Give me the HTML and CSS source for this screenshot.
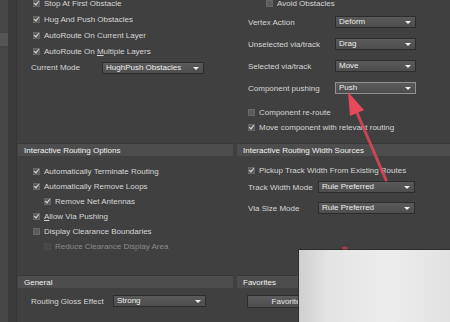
FILE: index.html
```html
<!DOCTYPE html>
<html lang="en">
<head>
    <meta charset="UTF-8">
    <meta name="viewport" content="width=device-width, initial-scale=1.0">
    <title>Interactive Routing Preferences</title>
    <link rel="stylesheet" href="styles.css">
</head>
<body>
    <div class="window">
        <div class="side">
            <div class="side-tab"></div>
        </div>

        <div class="panel">
            <!-- top block, scrolled up a little -->
            <section class="group top-left">
                <div class="row check"><span class="box on"></span><span>Stop At First Obstacle</span></div>
                <div class="row check"><span class="box on"></span><span>Hug And Push Obstacles</span></div>
                <div class="row check"><span class="box on"></span><span>AutoRoute On Current Layer</span></div>
                <div class="row check"><span class="box on"></span><span>AutoRoute On <u>M</u>ultiple Layers</span></div>
                <div class="row field">
                    <span class="label mode-label">Current Mode</span>
                    <div class="select mode-select">HughPush Obstacles</div>
                </div>
            </section>

            <section class="group top-right">
                <div class="row check avoid"><span class="box"></span><span>Avoid Obstacles</span></div>
                <div class="row field tall">
                    <span class="label">Vertex Action</span>
                    <div class="select">Deform</div>
                </div>
                <div class="row field tall">
                    <span class="label">Unselected via/track</span>
                    <div class="select">Drag</div>
                </div>
                <div class="row field tall">
                    <span class="label">Selected via/track</span>
                    <div class="select">Move</div>
                </div>
                <div class="row field tall">
                    <span class="label">Component pushing</span>
                    <div class="select focused">Push</div>
                </div>
                <div class="row check reroute"><span class="box"></span><span>Component re-route</span></div>
                <div class="row check small"><span class="box on"></span><span>Move component with relevant routing</span></div>
            </section>

            <section class="group">
                <h2 class="group-title">Interactive Routing Options</h2>
                <div class="group-body options">
                    <div class="row check small"><span class="box on"></span><span>Automatically Terminate Routing</span></div>
                    <div class="row check small"><span class="box on"></span><span>Automatically Remove Loops</span></div>
                    <div class="row check small indent"><span class="box on"></span><span>Remove Net Antennas</span></div>
                    <div class="row check small"><span class="box on"></span><span><u>A</u>llow Via Pushing</span></div>
                    <div class="row check small"><span class="box"></span><span>Display Clearance Boundaries</span></div>
                    <div class="row check small indent disabled"><span class="box"></span><span>Reduce Clearance Display Area</span></div>
                </div>
            </section>

            <section class="group">
                <h2 class="group-title">Interactive Routing Width Sources</h2>
                <div class="group-body sources">
                    <div class="row check small"><span class="box on"></span><span>Pickup Track Width From Existing Routes</span></div>
                    <div class="row field width-row">
                        <span class="label width-label">Track Width Mode</span>
                        <div class="select wide">Rule Preferred</div>
                    </div>
                    <div class="row field tall via-row">
                        <span class="label width-label">Via Size Mode</span>
                        <div class="select wide">Rule Preferred</div>
                    </div>
                </div>
            </section>

            <section class="group">
                <h2 class="group-title">General</h2>
                <div class="group-body general">
                    <div class="row field small">
                        <span class="label gloss-label">Routing Gloss Effect</span>
                        <div class="select gloss-select">Strong</div>
                    </div>
                </div>
            </section>

            <section class="group">
                <h2 class="group-title">Favorites</h2>
                <div class="group-body favorites">
                    <button class="btn">Favorites</button>
                </div>
            </section>
        </div>

        <!-- pasted image corner and annotation arrow over the dialog -->
        <div class="paste"></div>
        <svg class="arrow" width="450" height="322" viewBox="0 0 450 322">
            <line x1="386" y1="180" x2="355" y2="108" stroke="#e2475a" stroke-width="3" stroke-linecap="round" opacity="0.85"/>
            <polygon points="348,92 364,110 350,116" fill="#e8485c"/>
            <ellipse cx="345" cy="248" rx="3" ry="1.5" fill="#b8404e" opacity="0.8"/>
        </svg>
    </div>
</body>
</html>
```

FILE: styles.css
```css
* {
    margin: 0;
    padding: 0;
    box-sizing: border-box;
}

body {
    background: #404040;
    font-family: 'Liberation Sans', Arial, sans-serif;
    font-size: 8px;
    color: #d6d6d6;
    overflow: hidden;
}

.window {
    position: relative;
    display: flex;
    width: 450px;
    height: 322px;
    overflow: hidden;
}

.side {
    width: 17px;
    flex-shrink: 0;
    background: linear-gradient(to right, #454545 0 8px, #3b3b3b 8px 16px, #353535 16px 17px);
    padding-top: 33px;
}

.side-tab {
    width: 8px;
    height: 13px;
    background: #555;
}

.panel {
    display: grid;
    grid-template-columns: 215px 213px;
    grid-template-rows: 148px 132px auto;
    column-gap: 4px;
    margin-top: -5px;
    margin-left: 1px;
}

.group-title {
    height: 13px;
    line-height: 13px;
    padding-left: 6px;
    font-size: 8px;
    font-weight: normal;
    color: #f2f2f2;
    background: #4d4d4d;
    border-top: 1px solid #383838;
}

.row {
    display: flex;
    align-items: center;
    white-space: nowrap;
}

.check {
    height: 16px;
    gap: 4px;
}

.check.small {
    height: 15px;
}

.box {
    position: relative;
    width: 7px;
    height: 7px;
    background: #5c5c5c;
    border: 1px solid #666;
    flex-shrink: 0;
}

.box.on::after {
    content: '';
    position: absolute;
    left: 1px;
    top: -1px;
    width: 2px;
    height: 4px;
    border-right: 1px solid #dcdcdc;
    border-bottom: 1px solid #dcdcdc;
    transform: rotate(40deg);
}

.disabled {
    color: #8a8a8a;
}

.disabled .box {
    background: #474747;
    border-color: #4c4c4c;
}

.field {
    height: 17px;
}

.field.tall {
    height: 22px;
}

.field.small {
    height: 14px;
}

.label {
    width: 87px;
    flex-shrink: 0;
}

.select {
    position: relative;
    width: 81px;
    height: 12px;
    line-height: 10px;
    padding-left: 3px;
    color: #ececec;
    background: linear-gradient(#5a5a5a, #4d4d4d);
    border: 1px solid #2c2c2c;
}

.select::after {
    content: '';
    position: absolute;
    right: 4px;
    top: 4px;
    border-left: 3px solid transparent;
    border-right: 3px solid transparent;
    border-top: 3px solid #f0f0f0;
}

.select.focused {
    border-color: #909090;
}

/* top block */
.top-left {
    padding-left: 13px;
}

.top-left .check {
    padding-left: 2px;
}

.mode-label {
    width: 71px;
}

.mode-select {
    width: 102px;
}

.top-right {
    padding-left: 11px;
}

.avoid {
    padding-left: 18px;
}

.reroute {
    margin-top: 5px;
}

/* lower groups */
.options {
    padding: 8px 0 0 15px;
}

.indent {
    padding-left: 11px;
}

.sources {
    padding: 7px 0 0 11px;
}

.width-row {
    height: 18px;
}

.via-row {
    margin-top: 1px;
}

.width-label {
    width: 70px;
}

.wide {
    width: 97px;
}

.general {
    padding: 6px 0 0 13px;
}

.gloss-label {
    width: 82px;
}

.gloss-select {
    width: 93px;
}

.favorites {
    padding: 7px 0 0 10px;
}

.btn {
    width: 82px;
    height: 13px;
    font-family: inherit;
    font-size: 8px;
    color: #e6e6e6;
    background: linear-gradient(#5c5c5c, #4e4e4e);
    border: 1px solid #2c2c2c;
}

.paste {
    position: absolute;
    left: 298px;
    top: 249px;
    width: 152px;
    height: 73px;
    border-top: 1px solid #2e2e2e;
    border-left: 1px solid #2e2e2e;
    background: linear-gradient(to right, #cfcfcf, #e4e4e4 20%, #ececec 60%, #e2e2e2);
}

.arrow {
    position: absolute;
    left: 0;
    top: 0;
    pointer-events: none;
}
```
